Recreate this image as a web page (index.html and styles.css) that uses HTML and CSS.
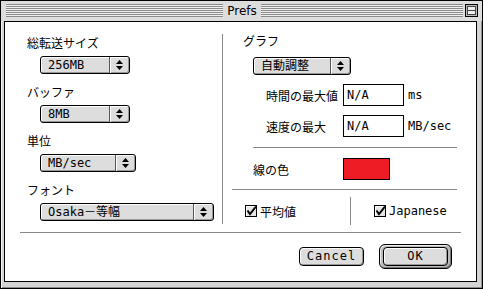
FILE: index.html
```html
<!DOCTYPE html>
<html lang="ja">
<head>
    <meta charset="UTF-8">
    <title>Prefs</title>
    <link rel="stylesheet" href="styles.css">
</head>
<body>
    <div class="window">
        <div class="titlebar">
            <div class="stripes"></div>
            <div class="title">Prefs</div>
            <div class="title-right">
                <div class="stripes"></div>
                <svg class="collapse" width="13" height="13" viewBox="0 0 13 13">
                    <rect x="0.5" y="0.5" width="12" height="12" fill="#bbb" stroke="#000"/>
                    <rect x="2.5" y="2.5" width="8" height="8" fill="#eee" stroke="#444"/>
                    <line x1="2" y1="6.5" x2="11" y2="6.5" stroke="#444"/>
                </svg>
            </div>
        </div>
        <div class="content">
            <div class="panes">
                <div class="pane-left">
                    <div class="field">
                        <div class="label">総転送サイズ</div>
                        <div class="popup w-size">
                            <span class="popup-text">256MB</span>
                            <span class="popup-arrows"><svg width="7" height="10" viewBox="0 0 7 10"><path d="M3.5 0L7 4H0Z M0 6H7L3.5 10Z"/></svg></span>
                        </div>
                    </div>
                    <div class="field">
                        <div class="label">バッファ</div>
                        <div class="popup w-size">
                            <span class="popup-text">8MB</span>
                            <span class="popup-arrows"><svg width="7" height="10" viewBox="0 0 7 10"><path d="M3.5 0L7 4H0Z M0 6H7L3.5 10Z"/></svg></span>
                        </div>
                    </div>
                    <div class="field">
                        <div class="label">単位</div>
                        <div class="popup w-unit">
                            <span class="popup-text">MB/sec</span>
                            <span class="popup-arrows"><svg width="7" height="10" viewBox="0 0 7 10"><path d="M3.5 0L7 4H0Z M0 6H7L3.5 10Z"/></svg></span>
                        </div>
                    </div>
                    <div class="field">
                        <div class="label">フォント</div>
                        <div class="popup w-font">
                            <span class="popup-text">Osaka－等幅</span>
                            <span class="popup-arrows"><svg width="7" height="10" viewBox="0 0 7 10"><path d="M3.5 0L7 4H0Z M0 6H7L3.5 10Z"/></svg></span>
                        </div>
                    </div>
                </div>
                <div class="vline"></div>
                <div class="pane-right">
                    <div class="label graph-label">グラフ</div>
                    <div class="popup w-graph">
                        <span class="popup-text">自動調整</span>
                        <span class="popup-arrows"><svg width="7" height="10" viewBox="0 0 7 10"><path d="M3.5 0L7 4H0Z M0 6H7L3.5 10Z"/></svg></span>
                    </div>
                    <div class="limit-row">
                        <span>時間の最大値</span>
                        <div class="textfield">N/A</div>
                        <span>ms</span>
                    </div>
                    <div class="limit-row">
                        <span>速度の最大</span>
                        <div class="textfield">N/A</div>
                        <span>MB/sec</span>
                    </div>
                    <div class="hr hr-inner"></div>
                    <div class="color-row">
                        <span>線の色</span>
                        <div class="swatch"></div>
                    </div>
                    <div class="hr"></div>
                    <div class="check-row">
                        <div class="check-cell first">
                            <label class="check"><svg width="12" height="12" viewBox="0 0 12 12"><rect x="0.5" y="0.5" width="11" height="11" fill="#e4e4e4" stroke="#000"/><path d="M1.5 10.5V1.5H10.5" stroke="#fff" fill="none"/><path d="M2.5 5.5L5 9L11 1.5" stroke="#000" stroke-width="2" fill="none"/></svg>平均値</label>
                        </div>
                        <div class="vsep"></div>
                        <div class="check-cell second">
                            <label class="check"><svg width="12" height="12" viewBox="0 0 12 12"><rect x="0.5" y="0.5" width="11" height="11" fill="#e4e4e4" stroke="#000"/><path d="M1.5 10.5V1.5H10.5" stroke="#fff" fill="none"/><path d="M2.5 5.5L5 9L11 1.5" stroke="#000" stroke-width="2" fill="none"/></svg>Japanese</label>
                        </div>
                    </div>
                </div>
            </div>
            <div class="hr hr-bottom"></div>
            <div class="buttons">
                <div class="btn">Cancel</div>
                <div class="btn-ring"><div class="btn">OK</div></div>
            </div>
        </div>
    </div>
</body>
</html>
```

FILE: styles.css
```css
body{
    margin: 0;
    background-color: #fff;
    font-family: "DejaVu Sans Mono", "Noto Sans CJK JP", monospace;
    font-size: 12px;
    color: #000;
}
.window{
    width: 483px;
    height: 289px;
    box-sizing: border-box;
    border: 1px solid #000;
    background-color: #d4d4d4;
    box-shadow: inset 1px 1px #f4f4f4, inset -1px -1px #8a8a8a;
    display: flex;
    flex-direction: column;
}
.titlebar{
    height: 20px;
    box-sizing: border-box;
    padding: 3px 4px 0 5px;
    display: grid;
    grid-template-columns: 1fr auto 1fr;
    align-items: start;
    background-color: #dddddd;
}
.stripes{
    height: 13px;
    background: repeating-linear-gradient(#8a8a8a 0 1px, #f0f0f0 1px 2px);
}
.title{
    padding: 0 4px;
    font-family: "DejaVu Sans", sans-serif;
    font-size: 12px;
    line-height: 14px;
}
.title-right{
    display: flex;
    gap: 2px;
}
.title-right .stripes{
    flex: 1;
}
.collapse{
    display: block;
}
.content{
    flex: 1;
    margin: 0 5px 6px 3px;
    border: 1px solid #000;
    background-color: #fff;
    display: flex;
    flex-direction: column;
}
.panes{
    display: flex;
}
.pane-left{
    width: 217px;
    box-sizing: border-box;
    padding: 14px 0 0 22px;
    display: flex;
    flex-direction: column;
    gap: 11px;
}
.label{
    line-height: 16px;
    margin-bottom: 4px;
}
.popup{
    margin-left: 13px;
    height: 18px;
    box-sizing: border-box;
    border: 1px solid #000;
    border-radius: 3px;
    background-color: #dddddd;
    box-shadow: inset 1px 1px #fff, inset -1px -1px #999;
    display: flex;
}
.w-size{ width: 90px; }
.w-unit{ width: 96px; }
.w-font{ width: 174px; }
.w-graph{ width: 98px; margin-left: 21px; }
.popup-text{
    flex: 1;
    padding-left: 7px;
    line-height: 16px;
    white-space: nowrap;
}
.popup-arrows{
    width: 19px;
    border-left: 1px solid #555;
    box-shadow: inset 1px 0 #fff;
    display: flex;
    align-items: center;
    justify-content: center;
}
.vline{
    width: 1px;
    background-color: #888;
    margin: 12px 0 8px 0;
}
.pane-right{
    width: 253px;
    box-sizing: border-box;
    padding: 12px 19px 7px 9px;
}
.graph-label{
    margin: 0 0 7px 11px;
}
.limit-row{
    display: grid;
    grid-template-columns: 73px 61px auto;
    column-gap: 4px;
    align-items: center;
    margin: 9px 0 0 34px;
}
.limit-row + .limit-row{
    margin-top: 9px;
}
.textfield{
    height: 22px;
    box-sizing: border-box;
    border: 1px solid #000;
    padding-left: 3px;
    line-height: 20px;
}
.hr{
    height: 1px;
    background-color: #888;
}
.hr-inner{
    margin: 10px 0 0 21px;
}
.color-row{
    display: grid;
    grid-template-columns: 90px 47px;
    align-items: center;
    margin: 10px 0 9px 21px;
}
.swatch{
    height: 22px;
    box-sizing: border-box;
    border: 1px solid #000;
    background-color: #ee1c24;
}
.check-row{
    display: flex;
    height: 28px;
    margin-top: 7px;
}
.check-cell{
    display: flex;
    align-items: center;
}
.check-cell.first{
    width: 118px;
    padding-left: 13px;
    box-sizing: border-box;
}
.check-cell.second{
    padding-left: 23px;
}
.check{
    display: flex;
    align-items: center;
    gap: 3px;
}
.vsep{
    width: 1px;
    background-color: #888;
}
.hr-bottom{
    margin: 0 15px;
}
.buttons{
    display: flex;
    justify-content: flex-end;
    align-items: center;
    gap: 15px;
    padding: 11px 24px 0 0;
}
.btn{
    width: 65px;
    height: 19px;
    box-sizing: border-box;
    border: 1px solid #000;
    border-radius: 4px;
    background-color: #dddddd;
    box-shadow: inset 1px 1px #fff, inset -1px -1px #999;
    text-align: center;
    line-height: 17px;
    font-size: 12px;
    letter-spacing: 1px;
}
.btn-ring{
    width: 73px;
    height: 25px;
    box-sizing: border-box;
    border: 1px solid #000;
    border-radius: 6px;
    padding: 2px 3px;
    background-color: #bbb;
    box-shadow: inset 1px 1px #eee, inset -1px -1px #777;
}
```
